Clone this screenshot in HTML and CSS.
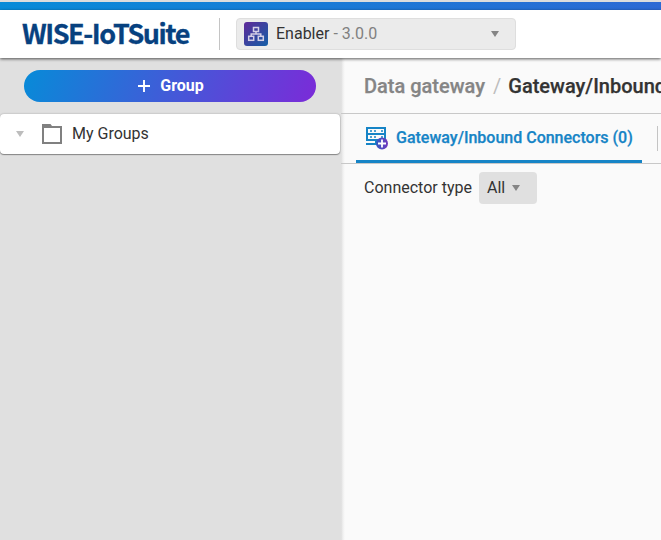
FILE: index.html
```html
<!DOCTYPE html>
<html lang="en">
<head>
<meta charset="utf-8">
<title>WISE-IoTSuite</title>
<link rel="stylesheet" href="styles.css">
</head>
<body>
<div class="accent"></div>
<header class="header">
  <div class="logo">WISE-IoTSuite</div>
  <div class="divider"></div>
  <div class="app-select">
    <svg class="app-icon" width="24" height="24" viewBox="0 0 24 24">
      <defs><linearGradient id="app" x1="0" y1="0" x2="1" y2="1"><stop offset="0" stop-color="#5f2999"/><stop offset="1" stop-color="#145fa6"/></linearGradient></defs>
      <rect width="24" height="24" rx="3" fill="url(#app)"/>
      <g fill="none" stroke="#d5d0e6" stroke-width="1.5">
        <rect x="9.5" y="5.5" width="5" height="4"/>
        <rect x="4.7" y="14.3" width="5" height="4"/>
        <rect x="14.3" y="14.3" width="5" height="4"/>
        <path d="M12 10v2M7.2 14v-2h9.6v2"/>
      </g>
    </svg>
    <span class="app-name">Enabler <span class="version">- 3.0.0</span></span>
    <span class="caret"></span>
  </div>
</header>
<div class="body">
  <aside class="sidebar">
    <button class="add-group">
      <svg width="12" height="12" viewBox="0 0 12 12"><path d="M6 0v12M0 6h12" stroke="#fff" stroke-width="1.9"/></svg>
      <span>Group</span>
    </button>
    <div class="group-row">
      <span class="caret light"></span>
      <svg class="folder" width="20" height="20" viewBox="0 0 20 20"><path d="M0 0h8.5l1.5 2h10v18H0zM2 4v14h16V4z" fill="#808080" fill-rule="evenodd"/></svg>
      <span class="group-name">My Groups</span>
    </div>
  </aside>
  <main class="main">
    <nav class="breadcrumb"><span class="parent">Data gateway</span><span class="slash">/</span><span class="current">Gateway/Inbound Connectors</span></nav>
    <div class="tabs">
      <div class="tab">
        <svg width="23" height="23" viewBox="0 0 23 23">
          <defs><linearGradient id="plus" x1="0" y1="0" x2="1" y2="0"><stop offset="0" stop-color="#335bc4"/><stop offset="1" stop-color="#7138bd"/></linearGradient></defs>
          <g fill="none" stroke="#1684c6" stroke-width="2">
            <path d="M1 1h18v6H1zM1 7v6h18V7M10 13v4M0 17h12"/>
            <path d="M4 4h2M8 4h2M15 4h2M4 10h2M8 10h2M15 10h2" stroke-width="1.6"/>
          </g>
          <circle cx="16" cy="16.5" r="6" fill="url(#plus)"/>
          <path d="M16 12.5v8M12 16.5h8" stroke="#fff" stroke-width="1.8"/>
        </svg>
        <span class="tab-label">Gateway/Inbound Connectors (0)</span>
      </div>
      <div class="tab-divider"></div>
    </div>
    <div class="filter">
      <span class="filter-label">Connector type</span>
      <div class="filter-select"><span>All</span><span class="caret"></span></div>
    </div>
  </main>
</div>
</body>
</html>
```

FILE: styles.css
```css
* { box-sizing: border-box; }
body {
  margin: 0;
  height: 540px;
  overflow: hidden;
  display: flex;
  flex-direction: column;
  font: 16px/24px Roboto, sans-serif;
  color: #333;
  background: #fafafa;
}
.accent {
  flex: none;
  height: 10px;
  border-top: 2px solid #dcdddd;
  background: linear-gradient(90deg, #078bd8, #2c69d4);
}
.header {
  flex: none;
  position: relative;
  z-index: 1;
  display: flex;
  align-items: center;
  height: 48px;
  padding-left: 22px;
  background: #fff;
  box-shadow: 0 1px 3px rgba(0, 0, 0, .65);
}
.logo {
  width: 197px;
  margin-top: -2px;
  font: 700 27px/32px "Noto Sans CJK SC", sans-serif;
  letter-spacing: -1.45px;
  -webkit-text-stroke: .3px #07417f;
  color: #07417f;
  white-space: nowrap;
}
.divider { width: 1px; height: 32px; background: #c4c4c4; }
.app-select {
  display: flex;
  align-items: center;
  width: 280px;
  height: 32px;
  margin-left: 16px;
  padding: 0 16px 0 7px;
  border: 1px solid #dedede;
  border-radius: 4px;
  background: #ebebeb;
}
.app-name { flex: 1; margin-left: 8px; }
.version { color: #808080; }
.caret {
  border: 4px solid transparent;
  border-top: 6px solid #858585;
  border-bottom: 0;
}
.caret.light { border-top-color: #bdbdbd; }
.body { flex: 1; display: flex; }
.sidebar { flex: none; width: 341px; background: #e0e0e0; }
.add-group {
  display: flex;
  align-items: center;
  justify-content: center;
  gap: 10px;
  width: 292px;
  height: 32px;
  margin: 12px 24px;
  padding: 0 0 0 2px;
  border: 0;
  border-radius: 16px;
  background: linear-gradient(110deg, #078bd8, #7b2bd8);
  color: #fff;
  font: 700 16px/24px Roboto, sans-serif;
}
.group-row {
  display: flex;
  align-items: center;
  width: 340px;
  height: 40px;
  padding-left: 16px;
  border-radius: 4px;
  background: #fff;
  box-shadow: 0 0 2px rgba(0, 0, 0, .3), 0 1px 1px rgba(0, 0, 0, .35);
}
.folder { margin: 0 10px 0 18px; }
.main {
  flex: 1;
  min-width: 0;
  overflow: hidden;
  background: linear-gradient(90deg, #dedede, #f0f0f0 2px, #fafafa 4px);
}
.breadcrumb {
  height: 56px;
  padding: 0 0 0 23px;
  border-bottom: 1px solid #c8c8c8;
  font-size: 20px;
  font-weight: 500;
  line-height: 56px;
  white-space: nowrap;
}
.parent, .current, .tab-label { -webkit-text-stroke: .25px currentColor; }
.parent { color: #858585; }
.slash { margin: 0 7px 0 8px; color: #bdbdbd; font-weight: 400; }
.tabs {
  display: flex;
  align-items: flex-start;
  height: 50px;
  padding-left: 15px;
  border-bottom: 1px solid #c8c8c8;
}
.tab {
  display: flex;
  align-items: center;
  width: 286px;
  height: 49px;
  padding: 2px 0 0 10px;
  border-bottom: 3px solid #1684c6;
  color: #1684c6;
  font-weight: 500;
  white-space: nowrap;
}
.tab-label { margin-left: 7px; }
.tab-divider { width: 1px; height: 25px; margin: 12px 0 0 15px; background: #c4c4c4; }
.filter { display: flex; align-items: center; padding: 8px 0 0 23px; }
.filter-select {
  display: flex;
  align-items: center;
  gap: 7px;
  width: 58px;
  height: 32px;
  margin-left: 7px;
  padding-left: 8px;
  border-radius: 4px;
  background: #e0e0e0;
}
```
